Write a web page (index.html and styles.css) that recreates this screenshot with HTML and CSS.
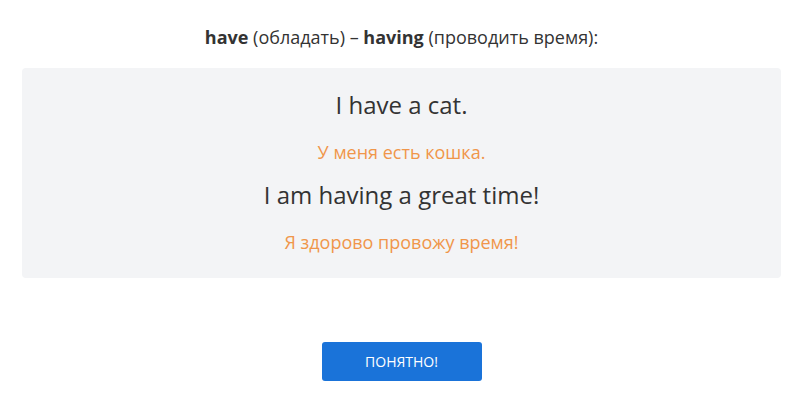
FILE: index.html
```html
<!DOCTYPE html>
<html lang="ru">
<head>
<meta charset="utf-8">
<link rel="stylesheet" href="styles.css">
</head>
<body>
<div class="page">
  <p class="title"><b>have</b> (обладать) – <b>having</b> (проводить время):</p>
  <div class="card">
    <p class="en">I have a cat.</p>
    <p class="ru">У меня есть кошка.</p>
    <p class="en">I am having a great time!</p>
    <p class="ru">Я здорово провожу время!</p>
  </div>
  <div class="actions">
    <button class="btn">Понятно!</button>
  </div>
</div>
</body>
</html>
```
FILE: styles.css
```css
* { box-sizing: border-box; }
html, body { margin: 0; padding: 0; background: #fff; }
body { font-family: "Open Sans", "Noto Sans", sans-serif; color: #333; }
.page { width: 759px; margin-left: 22px; padding-top: 24px; }
.title { margin: 0; text-align: center; font-size: 18px; line-height: 26px; color: #333; }
.title b { font-weight: 700; }
.card { margin-top: 18px; background: #f3f4f6; border-radius: 4px; padding: 20px 10px 10px; text-align: center; }
.en { margin: 0; font-size: 24px; line-height: 34px; color: #333; }
.ru { margin: 0; font-size: 18px; line-height: 26px; color: #f0964a; padding: 17px 0 13px; }
.actions { display: flex; justify-content: center; margin-top: 64px; }
.btn { width: 160px; height: 39px; background: #1a73d9; color: #fff; border: 0; border-radius: 3px; font-family: "Open Sans", sans-serif; font-size: 14px; text-transform: uppercase; cursor: pointer; }
```
